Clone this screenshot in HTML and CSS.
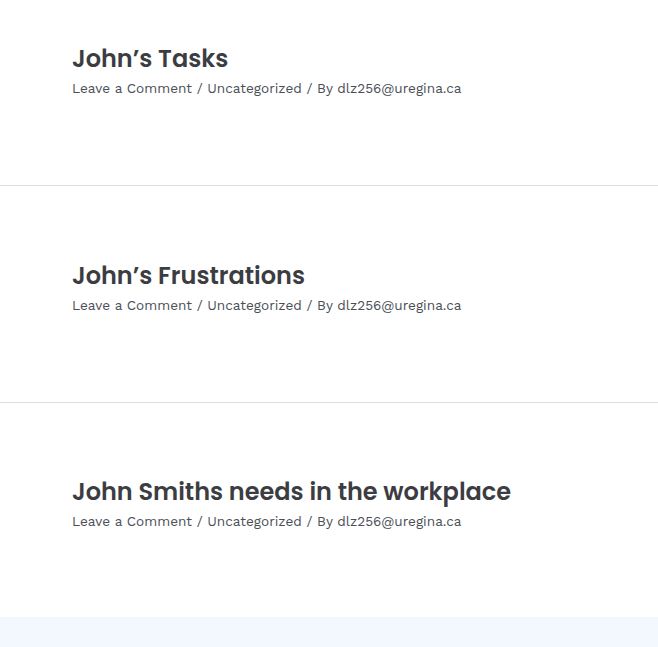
FILE: index.html
```html
<!DOCTYPE html>
<html lang="en">
<head>
<meta charset="utf-8">
<title>Posts</title>
<link rel="stylesheet" href="styles.css">
</head>
<body>
<main class="posts">
  <article class="post post-first">
    <h2 class="post-title">John’s Tasks</h2>
    <div class="post-meta">Leave a Comment / Uncategorized / By dlz256@uregina.ca</div>
  </article>
  <article class="post">
    <h2 class="post-title">John’s Frustrations</h2>
    <div class="post-meta">Leave a Comment / Uncategorized / By dlz256@uregina.ca</div>
  </article>
  <article class="post post-last">
    <h2 class="post-title">John Smiths needs in the workplace</h2>
    <div class="post-meta">Leave a Comment / Uncategorized / By dlz256@uregina.ca</div>
  </article>
</main>
<footer class="footer-band"></footer>
</body>
</html>
```

FILE: styles.css
```css
html, body {
  margin: 0;
  padding: 0;
  background: #ffffff;
}
.posts {
  display: flex;
  flex-direction: column;
}
.post {
  box-sizing: border-box;
  height: 217px;
  padding: 74px 72px 0;
  border-bottom: 1px solid #dddddd;
}
.post-first {
  height: 186px;
  padding-top: 43px;
}
.post-last {
  height: 214px;
  padding-top: 73px;
  border-bottom: none;
}
.post-title {
  margin: 0;
  font-family: "Poppins", "Inter", "Open Sans", sans-serif;
  font-weight: 600;
  font-size: 24px;
  line-height: 31px;
  color: #3c3d42;
  letter-spacing: 0;
}
.post-meta {
  margin-top: 3px;
  font-family: "Work Sans", "Open Sans", "Liberation Sans", sans-serif;
  font-size: 13.6px;
  line-height: 22px;
  color: #4b4f58;
}
.footer-band {
  height: 30px;
  background: #f3f7fe;
}
```
